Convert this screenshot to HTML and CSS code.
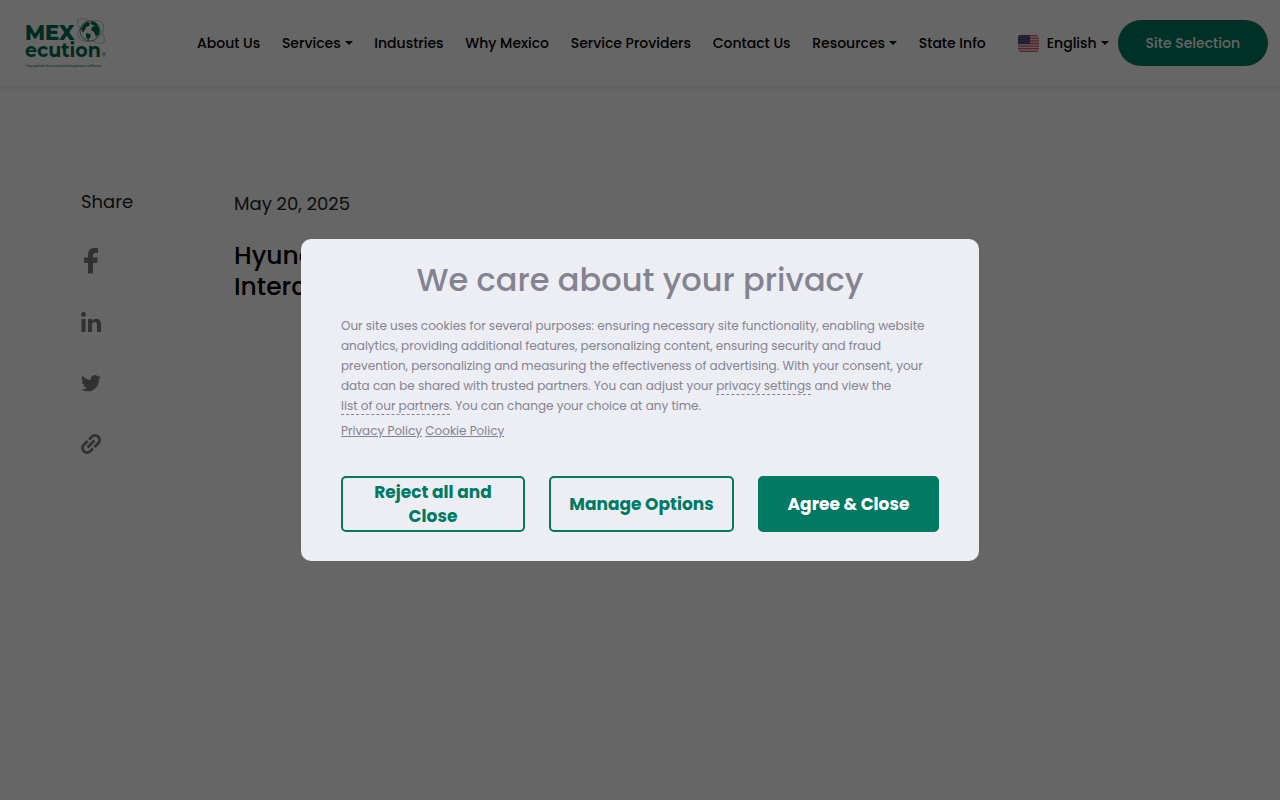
FILE: index.html
```html
<!DOCTYPE html>
<html lang="en">
<head>
  <meta charset="UTF-8">
  <meta name="viewport" content="width=device-width, initial-scale=1">
  <title>MEXecution</title>
  <link rel="stylesheet" href="styles.css">
</head>
<body>
  <header class="site-header">
    <a class="logo" href="#" aria-label="MEXecution">
      <svg width="84" height="54" viewBox="0 0 84 54">
        <g fill="#006b52" font-family="Montserrat, Inter, sans-serif">
          <text x="0" y="24" font-size="21" font-weight="800">MEX</text>
          <text x="0" y="41" font-size="19" font-weight="700">ecution</text>
          <text x="77" y="41" font-size="5">®</text>
          <text x="1" y="51" font-size="3">Your partner for a successful expansion to Mexico.</text>
        </g>
        <g fill="none" stroke="#7f9b93" stroke-width="0.5">
          <ellipse cx="66" cy="15" rx="17" ry="7" transform="rotate(42 66 15)"/>
          <ellipse cx="66" cy="15" rx="14" ry="9" transform="rotate(-30 66 15)"/>
        </g>
        <circle cx="65" cy="15" r="10" fill="#fff" stroke="#2e7d6b" stroke-width="0.8"/>
        <path fill="#006b52" d="M56 13q2-5 6-7l3 1-1 3-3 1-1 3-3 1zM66 5l5 2 3 5v6l-3 3-2-5-3-2 1-3 3-1-4-2zM61 17l4 1 1 2-2 3-1 1-2-3z"/>
        <circle cx="58" cy="15" r="1.200" fill="#e02040"/>
      </svg>
    </a>
    <nav class="main-nav">
      <a href="#">About Us</a>
      <a href="#" class="has-menu">Services</a>
      <a href="#">Industries</a>
      <a href="#">Why Mexico</a>
      <a href="#">Service Providers</a>
      <a href="#">Contact Us</a>
      <a href="#" class="has-menu">Resources</a>
      <a href="#">State Info</a>
    </nav>
    <div class="header-actions">
      <a href="#" class="language has-menu">
        <svg class="flag" width="21" height="17" viewBox="0 0 21 17" aria-hidden="true">
          <clipPath id="flag-shape"><rect width="21" height="17" rx="3"/></clipPath>
          <g clip-path="url(#flag-shape)">
            <rect width="21" height="17" fill="#f3e4e6"/>
            <path stroke="#d75a68" stroke-width="1.3" d="M0 .7h21M0 3.3h21M0 5.9h21M0 8.5h21M0 11.1h21M0 13.7h21M0 16.3h21"/>
            <rect width="12" height="9" fill="#4b4a80"/>
            <path stroke="#8f8db5" stroke-width="0.7" stroke-dasharray="0.8 1.4" d="M1 1.5h10M2 3.5h9M1 5.5h10M2 7.5h9"/>
          </g>
        </svg>
        English
      </a>
      <a href="#" class="site-selection">Site Selection</a>
    </div>
  </header>

  <main class="article">
    <aside class="share">
      <p>Share</p>
      <a href="#" aria-label="Facebook">
        <svg width="20" height="26" viewBox="0 0 20 26"><path d="M7 25.500V15H3V9.500h4V7q0-7 6-7h4v5h-3q-2 0-2 2v2.500h5L16 15h-4v10.500z"/></svg>
      </a>
      <a href="#" aria-label="LinkedIn">
        <svg width="20" height="20" viewBox="0 0 20 20"><circle cx="2.500" cy="2.400" r="2.400"/><path d="M.5 7h4v13h-4zM7 7h4v2q1.500-2.300 4-2.300 5 0 5 5.800V20h-4v-7q0-3-2.300-3Q11 10 11 13.200V20H7z"/></svg>
      </a>
      <a href="#" aria-label="Twitter">
        <svg width="20" height="18" viewBox="0 0 24 21"><path d="M24 3.300q-1.300.6-2.800.8 1.600-1 2.100-2.700-1.400.9-3.100 1.200A4.900 4.900 0 0 0 11.800 7Q5.600 6.700 1.700 1.900q-2.200 4 1.500 6.600-1.200 0-2.200-.6 0 3.900 3.900 4.900-1.100.3-2.200.1 1.100 3.300 4.600 3.400Q4.300 18.800 0 18.300 3.500 20.500 7.500 20.500 14.500 20.500 18.300 15.500T21.500 5.900Q23 4.800 24 3.300z"/></svg>
      </a>
      <a href="#" aria-label="Copy link">
        <svg width="20" height="20" viewBox="0 0 20 20"><path class="chain" d="M8 5.600l2.800-2.800a4.500 4.500 0 0 1 6.400 6.400L13.400 13M6.600 7L2.800 10.800a4.500 4.500 0 0 0 6.400 6.400L12 14.400M6.500 13.500l7-7"/></svg>
      </a>
    </aside>
    <article class="post">
      <time datetime="2025-05-20">May 20, 2025</time>
      <h1>Hyundai<br>Interc</h1>
    </article>
  </main>

  <div class="overlay">
    <section class="consent" role="dialog" aria-modal="true" aria-labelledby="consent-title">
      <h2 id="consent-title">We care about your privacy</h2>
      <p>
        Our site uses cookies for several purposes: ensuring necessary site functionality, enabling website<br>
        analytics, providing additional features, personalizing content, ensuring security and fraud<br>
        prevention, personalizing and measuring the effectiveness of advertising. With your consent, your<br>
        data can be shared with trusted partners. You can adjust your <a href="#" class="dashed">privacy settings</a> and view the<br>
        <a href="#" class="dashed">list of our partners</a>. You can change your choice at any time.
      </p>
      <p class="policies"><a href="#">Privacy Policy</a> <a href="#">Cookie Policy</a></p>
      <div class="consent-buttons">
        <button type="button">Reject all and Close</button>
        <button type="button">Manage Options</button>
        <button type="button" class="agree">Agree &amp; Close</button>
      </div>
    </section>
  </div>
</body>
</html>
```
FILE: styles.css
```css
* {
  box-sizing: border-box;
}
body {
  margin: 0;
  font-family: Poppins, Inter, sans-serif;
  color: #212529;
  background-color: #fff;
}
a {
  color: inherit;
}
.site-header {
  display: flex;
  align-items: center;
  min-height: 86px;
  padding: 0 12px 0 25px;
  box-shadow: 0 2px 4px rgba(0, 0, 0, 0.08);
  font-size: 14px;
  font-weight: 500;
  color: #000;
}
.site-header a {
  text-decoration: none;
  white-space: nowrap;
}
.logo {
  display: flex;
}
.main-nav {
  display: flex;
  flex: 1;
  justify-content: space-between;
  margin: 0 32px 0 88px;
}
.has-menu::after {
  content: "";
  display: inline-block;
  margin-left: 4px;
  vertical-align: 3px;
  border-top: 4px solid;
  border-left: 4px solid transparent;
  border-right: 4px solid transparent;
}
.header-actions {
  display: flex;
  align-items: center;
  gap: 9px;
}
.language {
  display: flex;
  align-items: center;
}
.flag {
  margin-right: 8px;
}
.site-selection {
  padding: 0 28px;
  line-height: 46px;
  border-radius: 23px;
  background-color: #007a63;
  color: #fff;
}
.article {
  display: flex;
  gap: 100px;
  padding: 101px 80px;
}
.share {
  display: flex;
  flex-direction: column;
  align-items: flex-start;
  width: 54px;
  padding-left: 1px;
  font-size: 18px;
}
.share p {
  margin: 0 0 31px;
  line-height: 30px;
}
.share a {
  display: flex;
  align-items: center;
  height: 26px;
  margin-bottom: 35px;
}
.share svg {
  fill: #7a7a7a;
}
.share .chain {
  fill: none;
  stroke: #7a7a7a;
  stroke-width: 2.8;
}
.post time {
  display: block;
  font-size: 18px;
  line-height: 34px;
}
.post h1 {
  margin: 19px 0 0;
  font-size: 25px;
  font-weight: 500;
  line-height: 31px;
  color: #000;
}
.overlay {
  position: fixed;
  inset: 0;
  display: flex;
  align-items: center;
  justify-content: center;
  background-color: rgba(0, 0, 0, 0.6);
}
.consent {
  width: 100%;
  max-width: 678px;
  padding: 20px 40px 29px;
  border-radius: 10px;
  background-color: #edeef4;
  color: #838391;
}
.consent h2 {
  margin: 0 0 16px;
  font-size: 32px;
  font-weight: 500;
  line-height: 41px;
  text-align: center;
}
.consent p {
  margin: 0;
  font-size: 12px;
  line-height: 20px;
}
.dashed {
  border-bottom: 1px dashed #838391;
  text-decoration: none;
}
.consent .policies {
  margin-top: 5px;
}
.consent-buttons {
  display: grid;
  grid-template-columns: 184fr 185fr 181fr;
  gap: 24px;
  margin-top: 35px;
}
.consent-buttons button {
  min-height: 56px;
  padding: 2px 16px;
  border: 2px solid #007a63;
  border-radius: 5px;
  background-color: transparent;
  color: #007a63;
  font-family: inherit;
  font-size: 17px;
  font-weight: 700;
  line-height: 24px;
  cursor: pointer;
}
.consent-buttons .agree {
  background-color: #007a63;
  color: #fff;
}
```
